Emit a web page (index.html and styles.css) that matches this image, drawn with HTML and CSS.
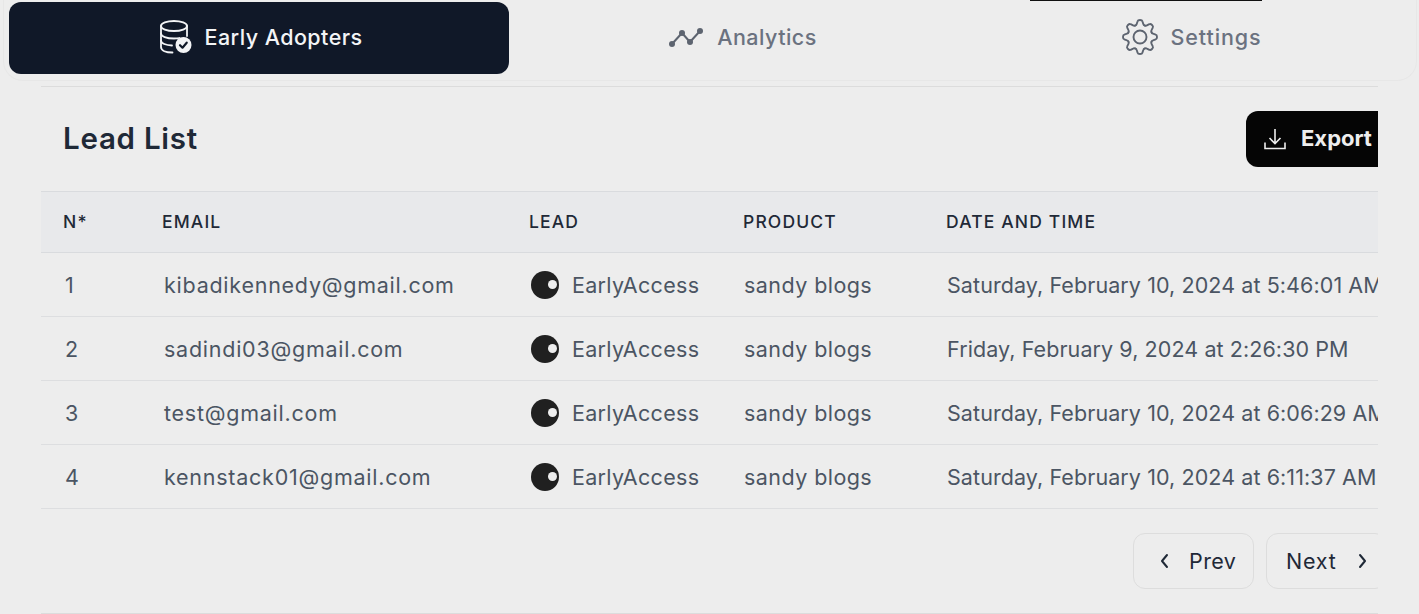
FILE: index.html
```html
<!DOCTYPE html>
<html lang="en">
<head>
<meta charset="utf-8">
<title>Lead List</title>
<link rel="stylesheet" href="styles.css">
</head>
<body>
<div class="topbar-mark"></div>
<nav class="tabs">
  <a class="tab tab-active">
    <svg class="tab-icon" width="34" height="36" viewBox="0 0 34 36" fill="none" stroke="currentColor" stroke-width="1.800" stroke-linecap="round" stroke-linejoin="round">
      <ellipse cx="15" cy="7" rx="13" ry="5"/>
      <path d="M2 7v21c0 3.500 5 5.500 11.500 5.500"/>
      <path d="M28 7v10"/>
      <path d="M2 14.500c0 2.800 5.500 5 13 5 2 0 3.700-.1 5.300-.5"/>
      <path d="M2 21.500c0 2.800 5 4.800 11 5"/>
      <circle cx="24.500" cy="26" r="8" fill="currentColor" stroke="none"/>
      <path d="M21 26.200l2.500 2.500 4.200-5" stroke="#101828" stroke-width="2.200"/>
    </svg>
    <span>Early Adopters</span>
  </a>
  <a class="tab">
    <svg class="tab-icon" width="36" height="20" viewBox="0 0 36 20" fill="none" stroke="currentColor" stroke-width="2" stroke-linecap="round" stroke-linejoin="round">
      <path d="M3 17L13 6l8 9L31 4"/>
      <g fill="currentColor" stroke="none"><circle cx="3" cy="17" r="3"/><circle cx="13" cy="6" r="3"/><circle cx="21" cy="15" r="3"/><circle cx="31" cy="4" r="3"/></g>
    </svg>
    <span>Analytics</span>
  </a>
  <a class="tab tab-settings">
    <svg class="tab-icon" width="36" height="36" viewBox="-18 -18 36 36" fill="none" stroke="currentColor" stroke-width="1.900" stroke-linecap="round" stroke-linejoin="round">
      <path id="gear-tooth" d="M-4.780-11.550Q-3.600-11.800-3.300-13L-2.400-15.700Q-2.100-17 0-17Q2.100-17 2.400-15.700L3.300-13Q3.600-11.800 4.780-11.550"/>
      <use href="#gear-tooth" transform="rotate(45)"/>
      <use href="#gear-tooth" transform="rotate(90)"/>
      <use href="#gear-tooth" transform="rotate(135)"/>
      <use href="#gear-tooth" transform="rotate(180)"/>
      <use href="#gear-tooth" transform="rotate(225)"/>
      <use href="#gear-tooth" transform="rotate(270)"/>
      <use href="#gear-tooth" transform="rotate(315)"/>
      <circle r="6.500"/>
    </svg>
    <span>Settings</span>
  </a>
</nav>
<main class="panel">
  <header class="panel-head">
    <h1 class="panel-title">Lead List</h1>
    <button class="export-btn">
      <svg width="24" height="24" viewBox="0 0 24 24" fill="none" stroke="currentColor" stroke-width="1.600" stroke-linecap="butt">
        <path d="M12 2v14.500M6.500 11l5.500 5.500 5.500-5.500M2 15.500v6h20v-6"/>
      </svg>
      <span>Export</span>
    </button>
  </header>
  <table class="leads">
    <colgroup>
      <col class="col-n"><col class="col-email"><col class="col-lead"><col class="col-product"><col class="col-date">
    </colgroup>
    <thead>
      <tr><th>N*</th><th>EMAIL</th><th>LEAD</th><th>PRODUCT</th><th>DATE AND TIME</th></tr>
    </thead>
    <tbody>
      <tr><td class="cell-n">1</td><td class="cell-email">kibadikennedy@gmail.com</td><td><span class="lead-cell"><span class="dot"></span>EarlyAccess</span></td><td class="cell-product">sandy blogs</td><td class="cell-date">Saturday, February 10, 2024 at 5:46:01 AM</td></tr>
      <tr><td class="cell-n">2</td><td class="cell-email">sadindi03@gmail.com</td><td><span class="lead-cell"><span class="dot"></span>EarlyAccess</span></td><td class="cell-product">sandy blogs</td><td class="cell-date">Friday, February 9, 2024 at 2:26:30 PM</td></tr>
      <tr><td class="cell-n">3</td><td class="cell-email">test@gmail.com</td><td><span class="lead-cell"><span class="dot"></span>EarlyAccess</span></td><td class="cell-product">sandy blogs</td><td class="cell-date">Saturday, February 10, 2024 at 6:06:29 AM</td></tr>
      <tr><td class="cell-n">4</td><td class="cell-email">kennstack01@gmail.com</td><td><span class="lead-cell"><span class="dot"></span>EarlyAccess</span></td><td class="cell-product">sandy blogs</td><td class="cell-date">Saturday, February 10, 2024 at 6:11:37 AM</td></tr>
    </tbody>
  </table>
  <footer class="pager">
    <button class="page-btn">
      <svg width="20" height="20" viewBox="0 0 20 20" fill="none" stroke="currentColor" stroke-width="2" stroke-linecap="round" stroke-linejoin="round"><path d="M12 4l-5 6 5 6"/></svg>
      <span>Prev</span>
    </button>
    <button class="page-btn page-btn-next">
      <span>Next</span>
      <svg width="20" height="20" viewBox="0 0 20 20" fill="none" stroke="currentColor" stroke-width="2" stroke-linecap="round" stroke-linejoin="round"><path d="M8 4l5 6-5 6"/></svg>
    </button>
  </footer>
</main>
</body>
</html>
```
FILE: styles.css
```css
* { box-sizing: border-box; }
html, body { height: 100%; }
body {
  margin: 0;
  overflow: hidden;
  background: #ededed;
  font-family: Inter, "Liberation Sans", sans-serif;
  color: #4b5563;
  position: relative;
}
.topbar-mark {
  position: absolute;
  left: 1030px;
  top: 0;
  width: 232px;
  height: 1px;
  background: #111;
}
.tabs {
  display: grid;
  grid-template-columns: 500px 468px 430px;
  height: 81px;
  margin: 0 2px 0 3px;
  padding: 2px 0 0 5px;
  border: 1px solid #e7e7e7;
  border-top: 0;
  border-radius: 0 0 20px 20px;
  align-items: start;
}
.tab {
  height: 72px;
  display: flex;
  align-items: center;
  justify-content: center;
  gap: 12px;
  padding-bottom: 2px;
  font-size: 21.500px;
  font-weight: 500;
  letter-spacing: .45px;
  color: #6b7280;
  border-radius: 12px;
}
.tab-icon { color: #5d6470; }
.tab-settings { letter-spacing: .9px; }
.tab-active {
  background: #101828;
  color: #f3f4f6;
  gap: 11px;
  padding-left: 4px;
}
.tab-active .tab-icon { color: #f3f4f6; }
.panel {
  width: 1337px;
  margin: 5px 0 0 41px;
  height: 528px;
  overflow: hidden;
  border-top: 1px solid #dcdcdc;
  border-bottom: 1px solid #dcdcdc;
}
.panel-head {
  display: flex;
  align-items: center;
  justify-content: space-between;
  height: 104px;
  padding: 24px 0 24px 22px;
}
.panel-title {
  margin: 0 0 2px;
  font-size: 29.500px;
  font-weight: 600;
  letter-spacing: .75px;
  color: #1f2937;
}
.export-btn {
  display: flex;
  align-items: center;
  gap: 14px;
  width: 142px;
  flex: none;
  margin-right: -10px;
  height: 56px;
  padding: 0 0 2px 17px;
  border: 0;
  border-radius: 12px 0 0 12px;
  background: #050505;
  color: #eeeeee;
  font: 700 22px Inter, "Liberation Sans", sans-serif;
}
.export-btn svg { margin-top: 2px; }
.leads {
  width: 1337px;
  table-layout: fixed;
  border-collapse: collapse;
}
.col-n { width: 99px; }
.col-email { width: 367px; }
.col-lead { width: 214px; }
.col-product { width: 203px; }
.leads th {
  height: 61px;
  padding: 0 0 2px 22px;
  text-align: left;
  font-size: 17.500px;
  font-weight: 500;
  letter-spacing: 1.150px;
  color: #1f2937;
  background: #e8e9eb;
  border-top: 1px solid #d9dbde;
  border-bottom: 1px solid #d9dbde;
  white-space: nowrap;
}
.leads td {
  height: 64px;
  padding: 0 0 0 23px;
  font-size: 21.500px;
  letter-spacing: .44px;
  color: #4b5563;
  border-bottom: 1px solid #dddee0;
  white-space: nowrap;
  overflow: hidden;
}
.leads .cell-n,
.leads .cell-email { padding-left: 24px; }
.leads .cell-email { letter-spacing: .75px; }
.leads .cell-date { letter-spacing: .08px; }
.lead-cell {
  display: flex;
  align-items: center;
  gap: 13px;
  margin: 0 0 0 1px;
  letter-spacing: .3px;
}
.dot {
  position: relative;
  width: 28px;
  height: 28px;
  border-radius: 50%;
  background: #202020;
  flex: none;
}
.dot::after {
  content: "";
  position: absolute;
  left: 17px;
  top: 9px;
  width: 9px;
  height: 9px;
  border-radius: 50%;
  background: #ededed;
}
.pager {
  display: flex;
  justify-content: flex-end;
  gap: 12px;
  padding-top: 24px;
  margin-right: -9px;
}
.page-btn {
  display: flex;
  align-items: center;
  gap: 14px;
  height: 56px;
  width: 121px;
  padding: 0 0 0 21px;
  border: 1px solid #dddddd;
  border-radius: 12px;
  background: #ededed;
  color: #1f2937;
  font: 400 21.500px Inter, "Liberation Sans", sans-serif;
  letter-spacing: .4px;
}
.page-btn-next {
  padding-left: 19px;
  gap: 16px;
  letter-spacing: .75px;
}
```
